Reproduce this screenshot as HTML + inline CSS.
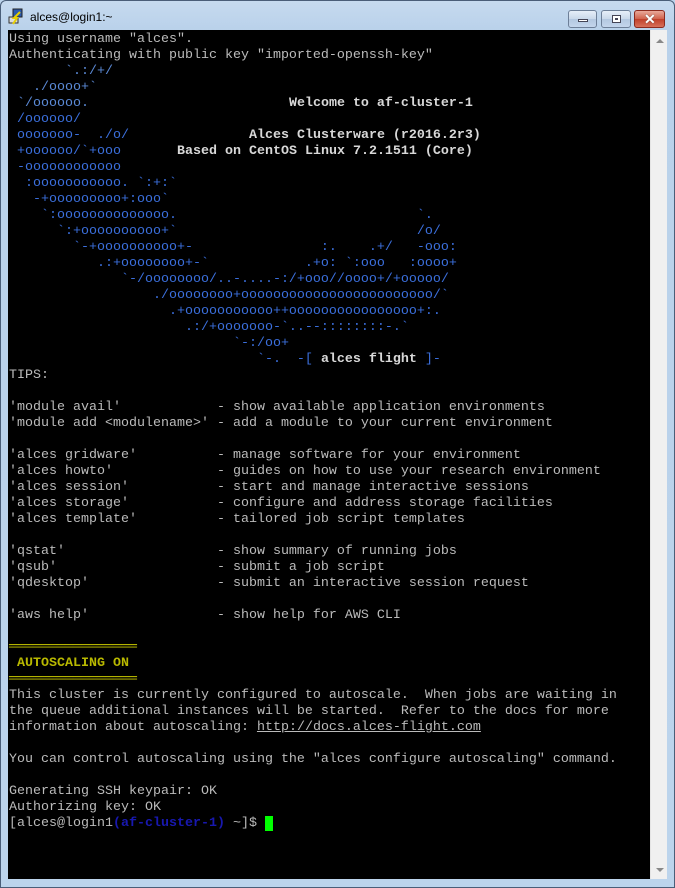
<!DOCTYPE html>
<html><head><meta charset="utf-8"><style>
*{margin:0;padding:0;box-sizing:border-box}
body{width:675px;height:888px;overflow:hidden;background:#bcd4ec;position:relative;font-family:"Liberation Sans",sans-serif}
.frame{position:absolute;left:0;top:0;width:675px;height:888px;border:1px solid #4a5e78;border-radius:6px 6px 0 0;background:linear-gradient(#c6daef,#b9d1ea 30px,#bcd4ec)}
.title{position:absolute;left:30px;top:10px;font-size:12px;color:#000}
.btn{position:absolute;top:10px;height:18px;border:1px solid #6d7f98;border-radius:3px;background:linear-gradient(#e6eef8,#c9d8ea 50%,#b3c7e0 51%,#c4d6ec)}
.term{position:absolute;left:8px;top:30px;width:642px;height:849px;background:#000;overflow:hidden}
.sb{position:absolute;left:650px;top:30px;width:17px;height:849px;background:#f0f0f0;border-left:1px solid #e4e4e4}
pre{position:absolute;left:1px;top:2px;font-family:"Liberation Mono",monospace;font-size:13.33px;line-height:16px;color:#bbb;white-space:pre}
.l{color:#5b8ad6}.d{color:#3b6fdc}.b{font-weight:bold;color:#d8d8d8}
.y{color:#c8c800}.yb{color:#b8b800;font-weight:bold}
.p{color:#1818b0;font-weight:bold}.cur{background:#00ff00}
</style></head><body>
<div class="frame"></div>
<svg style="position:absolute;left:8px;top:8px" width="18" height="18" viewBox="0 0 18 18"><rect x="5" y="1" width="9" height="8" fill="#2a5ab0" stroke="#222"/><rect x="1" y="9" width="9" height="6" fill="#ddd" stroke="#333"/><path d="M12 4 L6 10 L9 10 L5 16" stroke="#e8d000" stroke-width="2" fill="none"/></svg>
<div class="title">alces@login1:~</div>
<div class="btn" style="left:568px;width:29px"><div style="position:absolute;left:9px;top:8px;width:10px;height:3px;background:#fff;border:1px solid #445"></div></div>
<div class="btn" style="left:601px;width:30px"><div style="position:absolute;left:10px;top:4px;width:9px;height:8px;border:1px solid #445;background:#fff"><div style="margin:2px;width:3px;height:2px;background:#445"></div></div></div>
<div class="btn" style="left:634px;width:31px;border-color:#8b2a1e;background:linear-gradient(#e9a99a,#d0624c 50%,#c0402a 51%,#d8705a)"><div style="position:absolute;left:9px;top:0px;color:#fff;font-weight:bold;font-size:14px;text-shadow:0 0 1px #333">✕</div></div>
<div class="term"><pre>Using username "alces".
Authenticating with public key "imported-openssh-key"
<span class="l">       `.:/+/
   ./oooo+`
 `/oooooo.</span>                         <span class="b">Welcome to af-cluster-1</span>
<span class="d"> /oooooo/
 ooooooo-  ./o/</span>               <span class="b">Alces Clusterware (r2016.2r3)</span>
<span class="d"> +oooooo/`+ooo</span>       <span class="b">Based on CentOS Linux 7.2.1511 (Core)</span>
<span class="d"> -oooooooooooo
  :ooooooooooo. `:+:`
   -+ooooooooo+:ooo`
    `:oooooooooooooo.                              `.
      `:+oooooooooo+`                              /o/
        `-+oooooooooo+-                :.    .+/   -ooo:
           .:+oooooooo+-`            .+o: `:ooo   :oooo+
              `-/oooooooo/..-....-:/+ooo//oooo+/+ooooo/
                  ./oooooooo+oooooooooooooooooooooooo/`
                    .+ooooooooooo++oooooooooooooooo+:.
                      .:/+ooooooo-`..--::::::::-.`
                            `-:/oo+
                               `-.  -[ <span class="b">alces flight</span> ]-</span>
TIPS:

'module avail'            - show available application environments
'module add &lt;modulename&gt;' - add a module to your current environment

'alces gridware'          - manage software for your environment
'alces howto'             - guides on how to use your research environment
'alces session'           - start and manage interactive sessions
'alces storage'           - configure and address storage facilities
'alces template'          - tailored job script templates

'qstat'                   - show summary of running jobs
'qsub'                    - submit a job script
'qdesktop'                - submit an interactive session request

'aws help'                - show help for AWS CLI

<span class="y">════════════════</span>
 <span class="yb">AUTOSCALING ON</span>
<span class="y">════════════════</span>
This cluster is currently configured to autoscale.  When jobs are waiting in
the queue additional instances will be started.  Refer to the docs for more
information about autoscaling: <u>http://docs.alces-flight.com</u>

You can control autoscaling using the "alces configure autoscaling" command.

Generating SSH keypair: OK
Authorizing key: OK
[alces@login1<span class="p">(af-cluster-1)</span> ~]$ <span class="cur"> </span></pre></div>
<div class="sb"><div style="position:absolute;left:5px;top:9px;width:0;height:0;border-left:4px solid transparent;border-right:4px solid transparent;border-bottom:4px solid #888"></div><div style="position:absolute;left:5px;top:838px;width:0;height:0;border-left:4px solid transparent;border-right:4px solid transparent;border-top:4px solid #888"></div></div>
</body></html>
